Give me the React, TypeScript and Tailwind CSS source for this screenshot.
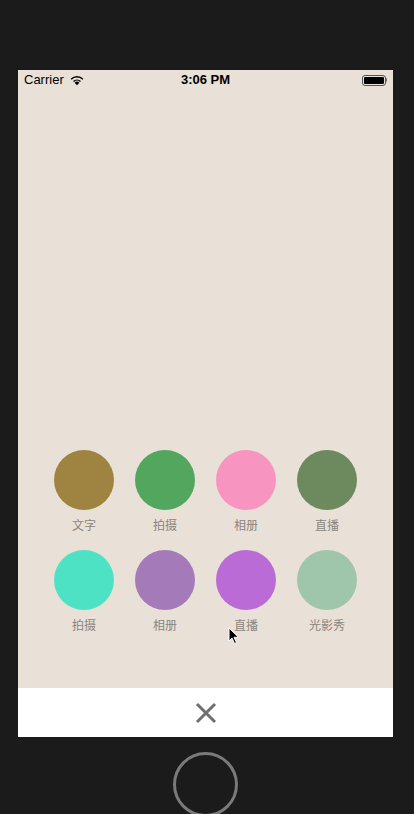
import React from 'react';

const ITEMS = [
  { label: '文字', color: 'bg-[#9e8440]' },
  { label: '拍摄', color: 'bg-[#53a65e]' },
  { label: '相册', color: 'bg-[#f794c0]' },
  { label: '直播', color: 'bg-[#6d8a5f]' },
  { label: '拍摄', color: 'bg-[#4ee2c5]' },
  { label: '相册', color: 'bg-[#a57ab8]' },
  { label: '直播', color: 'bg-[#bb6bd6]' },
  { label: '光影秀', color: 'bg-[#9fc6ab]' },
];

const StatusBar: React.FC = () => (
  <div className="relative h-5 flex items-center px-[6px] text-[13px] text-black font-['Liberation_Sans',sans-serif]">
    <div className="flex items-center gap-[5px]">
      <span>Carrier</span>
      <svg width="16" height="12" viewBox="0 0 14 10">
        <path d="M7 9.5 L4.9 7.3 A3 3 0 0 1 9.1 7.3 Z" fill="#000" />
        <path d="M3.5 5.9 A5 5 0 0 1 10.5 5.9 L9.6 6.8 A3.7 3.7 0 0 0 4.4 6.8 Z" fill="#000" />
        <path d="M1.4 3.8 A8 8 0 0 1 12.6 3.8 L11.7 4.7 A6.7 6.7 0 0 0 2.3 4.7 Z" fill="#000" />
      </svg>
    </div>
    <span className="absolute left-1/2 -translate-x-1/2 font-bold">3:06 PM</span>
    <div className="ml-auto flex items-center">
      <div className="w-[24px] h-[11px] rounded-[3px] border border-[#555] p-[1px]">
        <div className="w-full h-full rounded-[1px] bg-black" />
      </div>
      <div className="w-[1.5px] h-[4px] bg-[#777] rounded-r-sm" />
    </div>
  </div>
);

export default function App() {
  return (
    <div className="w-[414px] h-[814px] bg-[#1b1b1b] overflow-hidden flex flex-col items-start">
      <div className="shrink-0 ml-[18px] mt-[70px] w-[375px] h-[667px] bg-[#e9e0d7] flex flex-col relative">
        <StatusBar />
        <div className="flex-1 flex flex-col justify-end pb-[38px]">
          <div className="grid grid-cols-4 gap-x-[21px] px-[36px]">
            {ITEMS.map((it, i) => (
              <div key={i} className="h-[100px] flex flex-col items-center">
                <div className={`w-[60px] h-[60px] rounded-full ${it.color}`} />
                <span className="mt-[6px] text-[12px] leading-[17px] text-[#8a8580] font-['Noto_Sans_CJK_SC',sans-serif]">
                  {it.label}
                </span>
              </div>
            ))}
          </div>
        </div>
        <div className="h-[49px] bg-white flex items-center justify-center">
          <svg width="22" height="22" viewBox="0 0 22 22">
            <path d="M2 2 L20 20 M20 2 L2 20" stroke="#6f6f6f" strokeWidth="3" />
          </svg>
        </div>
        {/* mouse pointer */}
        <svg className="absolute left-[210px] top-[557px]" width="12" height="18" viewBox="0 0 12 18">
          <path d="M1 1 L1 14 L4 11 L6.5 16.5 L8.5 15.6 L6 10.3 L10.5 10.3 Z" fill="#000" stroke="#fff" strokeWidth="1" />
        </svg>
      </div>
      <div className="shrink-0 self-center mt-[15px] w-[65px] h-[65px] rounded-full border-[3px] border-[#7a7a7a] ml-[-3px]" />
    </div>
  );
}
